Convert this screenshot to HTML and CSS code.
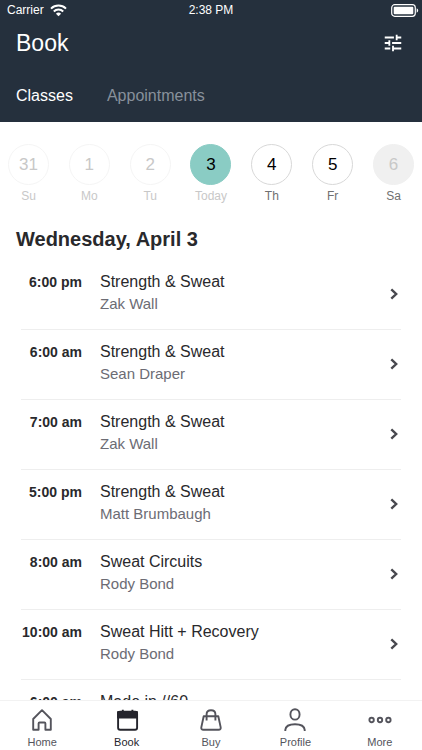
FILE: index.html
```html
<!DOCTYPE html>
<html lang="en">
<head>
    <meta charset="UTF-8">
    <meta name="viewport" content="width=device-width, initial-scale=1.0">
    <title>Book</title>
    <link rel="stylesheet" href="styles.css">
</head>
<body>
    <header class="header">
        <div class="status-bar">
            <div class="carrier">
                <span>Carrier</span>
                <svg width="17" height="13" viewBox="0 0 17 13" fill="none" stroke="#fff" stroke-width="2">
                    <path d="M1 4.6a10.8 10.8 0 0 1 15 0M3.8 7.5a6.8 6.8 0 0 1 9.4 0" />
                    <path d="M8.5 12.3 5.9 9.7a3.8 3.8 0 0 1 5.2 0z" fill="#fff" stroke="none" />
                </svg>
            </div>
            <span>2:38 PM</span>
            <div class="battery">
                <svg width="28" height="13" viewBox="0 0 28 13">
                    <rect x="0.7" y="0.7" width="23.6" height="11.6" rx="3" fill="none" stroke="#fff" stroke-width="1.2" />
                    <rect x="2.7" y="2.7" width="19.6" height="7.6" rx="1" fill="#fff" />
                    <path d="M25.7 4.3c2 .8 2 3.6 0 4.4z" fill="#fff" />
                </svg>
            </div>
        </div>
        <div class="title-bar">
            <h1>Book</h1>
            <button class="filter" type="button" aria-label="Filter">
                <svg width="22" height="22" viewBox="0 0 24 24" fill="#fff">
                    <path d="M3 17v2h6v-2H3zM3 5v2h10V5H3zm10 16v-2h8v-2h-8v-2h-2v6h2zM7 9v2H3v2h4v2h2V9H7zm14 4v-2H11v2h10zm-6-4h2V7h4V5h-4V3h-2v6z" />
                </svg>
            </button>
        </div>
        <nav class="tabs">
            <a class="active" href="#classes">Classes</a>
            <a href="#appointments">Appointments</a>
        </nav>
    </header>

    <main class="content">
        <div class="week">
            <button class="day past" type="button"><span class="number">31</span><span>Su</span></button>
            <button class="day past" type="button"><span class="number">1</span><span>Mo</span></button>
            <button class="day past" type="button"><span class="number">2</span><span>Tu</span></button>
            <button class="day today" type="button"><span class="number">3</span><span>Today</span></button>
            <button class="day" type="button"><span class="number">4</span><span>Th</span></button>
            <button class="day" type="button"><span class="number">5</span><span>Fr</span></button>
            <button class="day closed" type="button"><span class="number">6</span><span>Sa</span></button>
        </div>

        <h2>Wednesday, April 3</h2>

        <ul class="class-list">
            <li><a href="#class-1">
                <time>6:00 pm</time>
                <div class="info"><h3>Strength &amp; Sweat</h3><p>Zak Wall</p></div>
                <svg class="chevron" viewBox="0 0 8 12"><path d="M1.3 1.3 6.2 6l-4.9 4.7" /></svg>
            </a></li>
            <li><a href="#class-2">
                <time>6:00 am</time>
                <div class="info"><h3>Strength &amp; Sweat</h3><p>Sean Draper</p></div>
                <svg class="chevron" viewBox="0 0 8 12"><path d="M1.3 1.3 6.2 6l-4.9 4.7" /></svg>
            </a></li>
            <li><a href="#class-3">
                <time>7:00 am</time>
                <div class="info"><h3>Strength &amp; Sweat</h3><p>Zak Wall</p></div>
                <svg class="chevron" viewBox="0 0 8 12"><path d="M1.3 1.3 6.2 6l-4.9 4.7" /></svg>
            </a></li>
            <li><a href="#class-4">
                <time>5:00 pm</time>
                <div class="info"><h3>Strength &amp; Sweat</h3><p>Matt Brumbaugh</p></div>
                <svg class="chevron" viewBox="0 0 8 12"><path d="M1.3 1.3 6.2 6l-4.9 4.7" /></svg>
            </a></li>
            <li><a href="#class-5">
                <time>8:00 am</time>
                <div class="info"><h3>Sweat Circuits</h3><p>Rody Bond</p></div>
                <svg class="chevron" viewBox="0 0 8 12"><path d="M1.3 1.3 6.2 6l-4.9 4.7" /></svg>
            </a></li>
            <li><a href="#class-6">
                <time>10:00 am</time>
                <div class="info"><h3>Sweat Hitt + Recovery</h3><p>Rody Bond</p></div>
                <svg class="chevron" viewBox="0 0 8 12"><path d="M1.3 1.3 6.2 6l-4.9 4.7" /></svg>
            </a></li>
            <li><a href="#class-7">
                <time>6:00 am</time>
                <div class="info"><h3>Made in //60</h3></div>
            </a></li>
        </ul>
    </main>

    <nav class="bottom-nav">
        <a href="#home">
            <svg viewBox="0 0 24 24"><path d="M3.2 11 12 2.2l8.8 8.8v10.8h-5.4v-6.4q0-.9-.9-.9h-5q-.9 0-.9.9v6.4H3.2z" /></svg>
            <span>Home</span>
        </a>
        <a class="active" href="#book">
            <svg viewBox="0 0 24 24">
                <rect x="3.1" y="3.8" width="19" height="18" rx="2" />
                <path d="M3 4h19v5.5H3z" fill="#25252d" />
                <path d="M7.8 1.8v3M17.4 1.8v3" />
            </svg>
            <span>Book</span>
        </a>
        <a href="#buy">
            <svg viewBox="0 0 24 24">
                <path d="M4.7 8.2h14.6l2.4 11.2q.3 2.4-2.1 2.4H4.4q-2.4 0-2.1-2.4z" />
                <path d="M7.6 12.4V6.3q0-4.1 4.4-4.1t4.4 4.1v6.1" />
            </svg>
            <span>Buy</span>
        </a>
        <a href="#profile">
            <svg viewBox="0 0 24 24">
                <ellipse cx="12" cy="6.4" rx="4.6" ry="5.2" />
                <path d="M2.3 23v-1.2C2.7 18 6.3 16.2 12 16.2s9.3 1.8 9.7 5.6V23" />
            </svg>
            <span>Profile</span>
        </a>
        <a href="#more">
            <svg viewBox="0 0 24 24">
                <circle cx="3.6" cy="12" r="2.2" />
                <circle cx="12" cy="12" r="2.2" />
                <circle cx="20.4" cy="12" r="2.2" />
            </svg>
            <span>More</span>
        </a>
    </nav>
</body>
</html>
```
FILE: styles.css
```css
* {
    box-sizing: border-box;
}

body {
    margin: 0;
    height: 100vh;
    display: flex;
    flex-direction: column;
    background-color: #fff;
    color: #29292c;
    font-family: "Liberation Sans", Arial, sans-serif;
}

h1, h2, h3, p, ul {
    margin: 0;
    padding: 0;
}

a {
    color: inherit;
    text-decoration: none;
}

button {
    padding: 0;
    border: none;
    background: none;
    font-family: inherit;
    cursor: pointer;
}

svg {
    display: block;
}

.header {
    flex: none;
    background-color: #25303d;
    color: #fff;
}

.status-bar {
    display: grid;
    grid-template-columns: 1fr auto 1fr;
    align-items: center;
    height: 20px;
    padding: 0 3px;
    font-size: 12px;
}

.carrier {
    display: flex;
    align-items: center;
    gap: 6px;
    padding-left: 4px;
}

.battery {
    justify-self: end;
}

.title-bar {
    display: flex;
    justify-content: space-between;
    align-items: center;
    height: 46px;
    padding: 0 18px 0 16px;
}

.title-bar h1 {
    font-size: 23px;
    font-weight: normal;
}

.tabs {
    display: flex;
    align-items: center;
    gap: 34px;
    height: 56px;
    padding: 4px 16px 0;
    font-size: 16px;
    color: #88909b;
}

.tabs .active {
    color: #fff;
}

.content {
    flex: 1;
    min-height: 0;
    overflow: hidden;
}

.week {
    display: flex;
    justify-content: space-between;
    padding: 22px 8px 0;
}

.day {
    display: flex;
    flex-direction: column;
    align-items: center;
    gap: 4px;
    width: 41px;
    font-size: 12px;
    line-height: 14px;
    color: #707070;
}

.number {
    display: flex;
    align-items: center;
    justify-content: center;
    width: 41px;
    height: 41px;
    border: 1px solid #d8d8d8;
    border-radius: 50%;
    font-size: 17px;
    color: #000;
}

.past, .today {
    color: #c8c8c8;
}

.past .number {
    border-color: #f5f5f5;
    color: #c8c8c8;
}

.today .number {
    border-color: #8accc4;
    background-color: #8accc4;
}

.closed .number {
    border-color: #f0f0f0;
    background-color: #f0f0f0;
    color: #c8c8c8;
}

.content h2 {
    padding: 24px 16px 9px;
    font-size: 20px;
    line-height: 24px;
}

.class-list {
    padding: 0 21px;
    list-style: none;
}

.class-list li {
    height: 70px;
    border-bottom: 1px solid #eee;
}

.class-list a {
    display: flex;
    align-items: flex-start;
    padding-top: 12px;
}

.class-list time {
    width: 61px;
    font-size: 14px;
    font-weight: bold;
    line-height: 20px;
    text-align: right;
    white-space: nowrap;
}

.info {
    flex: 1;
    padding-left: 18px;
}

.info h3 {
    font-size: 16px;
    font-weight: normal;
    line-height: 20px;
}

.info p {
    padding-top: 2px;
    font-size: 15px;
    line-height: 20px;
    color: #6c6c74;
}

.chevron {
    align-self: center;
    width: 8px;
    height: 12px;
    margin: 2px 3px 0 0;
    fill: none;
    stroke: #48484e;
    stroke-width: 2.4;
}

.bottom-nav {
    flex: none;
    display: flex;
    height: 50px;
    border-top: 1px solid #f2f2f2;
    background-color: #fff;
    font-size: 11px;
    line-height: 12px;
    color: #54545c;
}

.bottom-nav a {
    flex: 1;
    display: flex;
    flex-direction: column;
    align-items: center;
    gap: 4px;
    padding-top: 7px;
}

.bottom-nav svg {
    width: 24px;
    height: 24px;
    fill: none;
    stroke: #54545c;
    stroke-width: 1.9;
    stroke-linejoin: round;
}

.bottom-nav .active {
    color: #25252d;
}

.bottom-nav .active svg {
    stroke: #25252d;
}
```
